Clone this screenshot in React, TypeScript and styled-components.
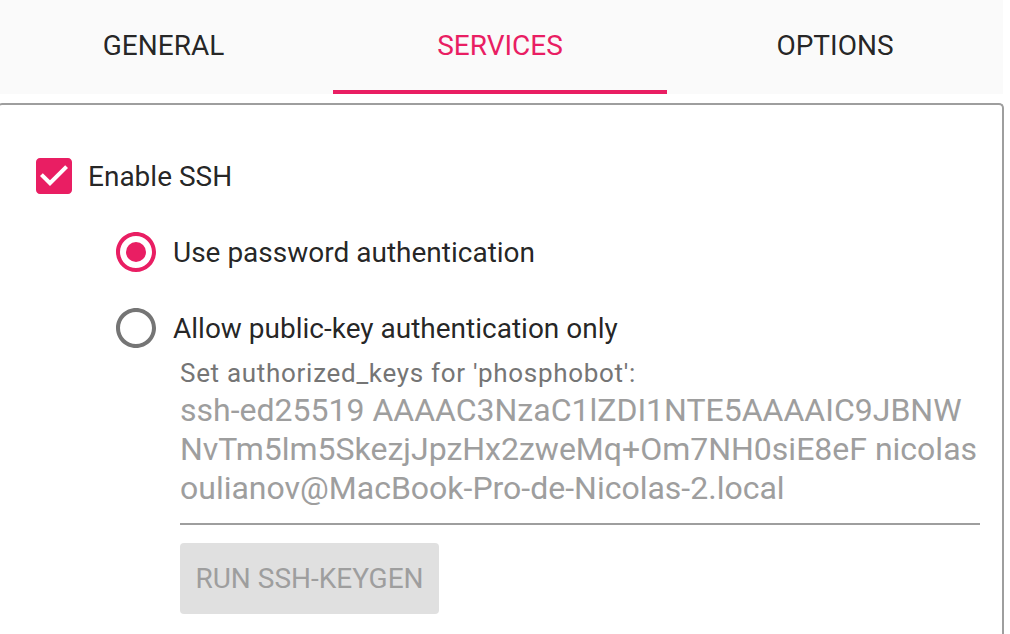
import React from "react";
import styled, { createGlobalStyle } from "styled-components";

const Global = createGlobalStyle`
  html, body { margin: 0; padding: 0; background: #ffffff; overflow: hidden; }
  body { font-family: Roboto, "Liberation Sans", sans-serif; }
`;

const PINK = "#e91e63";

const Page = styled.div`
  width: 1010px;
  height: 634px;
  display: flex;
  flex-direction: column;
  overflow: hidden;
`;

const TabBar = styled.div`
  width: 1003px;
  height: 94px;
  background: #fafafa;
  display: grid;
  grid-template-columns: 333px 334px 336px;
  flex-shrink: 0;
`;

const Tab = styled.div<{ $active?: boolean; $nudge?: number }>`
  position: relative;
  display: flex;
  align-items: center;
  justify-content: center;
  padding-bottom: 4px;
  padding-right: ${(p) => p.$nudge ?? 0}px;
  font-size: 28px;
  text-transform: uppercase;
  color: ${(p) => (p.$active ? PINK : "rgba(0,0,0,0.87)")};
  &::after {
    content: "";
    position: absolute;
    left: 0;
    right: 0;
    bottom: 0;
    height: 4px;
    background: ${(p) => (p.$active ? PINK : "transparent")};
  }
`;

const Frame = styled.div`
  margin-top: 9px;
  margin-left: -3px;
  width: 1007px;
  flex: 1;
  border: 2.5px solid #9e9e9e;
  border-bottom: none;
  border-radius: 5px 5px 0 0;
  box-sizing: border-box;
  padding: 47px 0 0 31px;
  display: flex;
  flex-direction: column;
`;

const CheckRow = styled.label`
  display: flex;
  align-items: center;
  gap: 10px;
`;

const Icon = styled.svg`
  width: 48px;
  height: 48px;
  flex-shrink: 0;
  display: block;
`;

const Label = styled.span`
  font-size: 28px;
  color: rgba(0, 0, 0, 0.87);
`;

const Options = styled.div`
  margin-left: 82px;
  margin-top: 28px;
  display: flex;
  flex-direction: column;
`;

const RadioGroup = styled.div`
  display: flex;
  flex-direction: column;
  gap: 28px;
`;

const RadioRow = styled.label`
  display: flex;
  align-items: center;
  gap: 13px;
`;

const KeyBlock = styled.div`
  margin-left: 68px;
  margin-top: 6px;
  width: 800px;
  display: flex;
  flex-direction: column;
`;

const Helper = styled.div`
  font-size: 26px;
  letter-spacing: 0.7px;
  color: #757575;
  line-height: 30px;
`;

const KeyText = styled.div`
  margin-top: 3px;
  font-size: 32px;
  line-height: 39px;
  color: #9e9e9e;
  padding-bottom: 15px;
  border-bottom: 2px solid #9e9e9e;
`;

const KeyLine = styled.span`
  display: block;
  white-space: nowrap;
`;

const Button = styled.button`
  margin-top: 18px;
  align-self: flex-start;
  width: 259px;
  height: 71px;
  border: none;
  border-radius: 4px;
  background: #e0e0e0;
  color: #9e9e9e;
  font-family: Roboto, "Liberation Sans", sans-serif;
  font-size: 28px;
  text-transform: uppercase;
  padding: 0;
`;

function CheckboxIcon() {
  return (
    <Icon viewBox="0 0 24 24">
      <path
        fill={PINK}
        d="M19 3H5c-1.11 0-2 .9-2 2v14c0 1.1.89 2 2 2h14c1.11 0 2-.9 2-2V5c0-1.1-.89-2-2-2zm-9 14l-5-5 1.41-1.41L10 14.17l7.59-7.59L19 8l-9 9z"
      />
    </Icon>
  );
}

function RadioIcon({ checked }: { checked?: boolean }) {
  const color = checked ? PINK : "#757575";
  return (
    <Icon viewBox="0 0 24 24">
      <path
        fill={color}
        d="M12 2C6.48 2 2 6.48 2 12s4.48 10 10 10 10-4.48 10-10S17.52 2 12 2zm0 18c-4.42 0-8-3.58-8-8s3.58-8 8-8 8 3.58 8 8-3.58 8-8 8z"
      />
      {checked && <circle cx="12" cy="12" r="5" fill={color} />}
    </Icon>
  );
}

export default function App() {
  return (
    <Page>
      <Global />
      <TabBar>
        <Tab $nudge={6}>General</Tab>
        <Tab $active>Services</Tab>
        <Tab>Options</Tab>
      </TabBar>
      <Frame>
        <CheckRow>
          <CheckboxIcon />
          <Label>Enable SSH</Label>
        </CheckRow>
        <Options>
          <RadioGroup>
            <RadioRow>
              <RadioIcon checked />
              <Label>Use password authentication</Label>
            </RadioRow>
            <RadioRow>
              <RadioIcon />
              <Label>Allow public-key authentication only</Label>
            </RadioRow>
          </RadioGroup>
          <KeyBlock>
            <Helper>Set authorized_keys for 'phosphobot':</Helper>
            <KeyText>
              <KeyLine>ssh-ed25519 AAAAC3NzaC1lZDI1NTE5AAAAIC9JBNW</KeyLine>
              <KeyLine>NvTm5lm5SkezjJpzHx2zweMq+Om7NH0siE8eF nicolas</KeyLine>
              <KeyLine>oulianov@MacBook-Pro-de-Nicolas-2.local</KeyLine>
            </KeyText>
            <Button disabled>Run ssh-keygen</Button>
          </KeyBlock>
        </Options>
      </Frame>
    </Page>
  );
}
